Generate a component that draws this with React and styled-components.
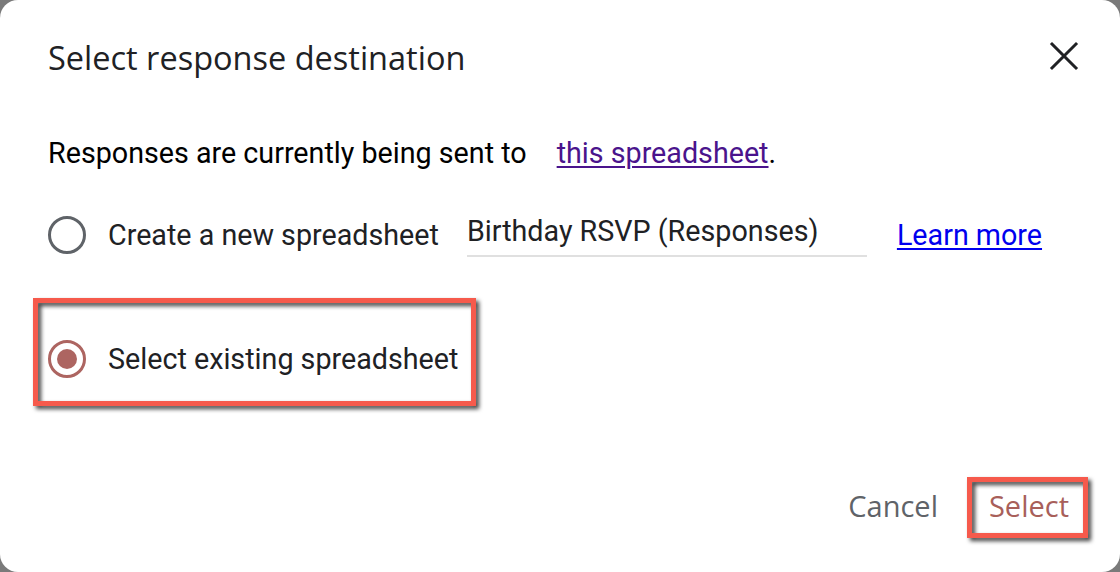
import React from 'react';
import styled, { createGlobalStyle } from 'styled-components';

const GlobalStyle = createGlobalStyle`
  html, body {
    margin: 0;
    padding: 0;
    background: #7a7a7a;
  }
  body {
    font-family: Roboto, "Liberation Sans", sans-serif;
  }
`;

const Dialog = styled.div`
  box-sizing: border-box;
  width: 1120px;
  height: 572px;
  background: #fff;
  border-radius: 18px;
  padding: 38px 36px 43px 48px;
  display: flex;
  flex-direction: column;
`;

const Header = styled.div`
  display: flex;
  align-items: center;
  justify-content: space-between;
  height: 40px;
`;

const Title = styled.h2`
  margin: 0;
  font-family: "Open Sans", sans-serif;
  font-weight: 500;
  font-size: 32.5px;
  line-height: 40px;
  color: #202124;
`;

const CloseButton = styled.button`
  border: 0;
  background: none;
  padding: 0;
  width: 40px;
  height: 40px;
  display: flex;
  align-items: center;
  justify-content: center;
  margin-top: -4px;
`;

const Text = styled.p`
  margin: 55px 0 0;
  font-size: 28.7px;
  line-height: 40px;
  color: #000;
`;

const Link = styled.a`
  color: ${p => p.$visited ? '#4a148c' : '#0000ee'};
  font-size: 28.7px;
  text-decoration: underline;
  text-underline-offset: 3px;
  text-decoration-thickness: 2px;
  margin-left: ${p => p.$gap || 0}px;
  cursor: pointer;
`;

const Options = styled.div`
  display: flex;
  flex-direction: column;
  gap: 76px;
  margin-top: 38px;
`;

const Row = styled.div`
  display: flex;
  align-items: center;
  height: 48px;
`;

const Radio = styled.span`
  box-sizing: border-box;
  width: 38px;
  height: 38px;
  border-radius: 50%;
  border: 3px solid ${p => p.$checked ? '#ad6561' : '#5f6368'};
  display: flex;
  align-items: center;
  justify-content: center;
  flex-shrink: 0;
  &::after {
    content: '';
    display: ${p => p.$checked ? 'block' : 'none'};
    width: 20px;
    height: 20px;
    border-radius: 50%;
    background: #ad6561;
  }
`;

const Label = styled.span`
  margin-left: 22px;
  font-size: 28.7px;
  color: #202124;
  white-space: nowrap;
`;

const NameInput = styled.div`
  box-sizing: border-box;
  width: 400px;
  height: 48px;
  margin-left: 28px;
  margin-top: -4px;
  border-bottom: 2px solid #e0e0e0;
  font-size: 28.7px;
  line-height: 44px;
  color: #202124;
  white-space: nowrap;
`;

const Highlight = styled.div`
  position: relative;
  align-self: flex-start;
  &::after {
    content: '';
    position: absolute;
    top: ${p => p.$top}px;
    right: ${p => p.$right}px;
    bottom: ${p => p.$bottom}px;
    left: ${p => p.$left}px;
    border: 5px solid #f65a4c;
    filter: drop-shadow(3px 3px 2px rgba(0, 0, 0, 0.75));
    pointer-events: none;
  }
`;

const Footer = styled.div`
  margin-top: auto;
  margin-right: -3px;
  display: flex;
  justify-content: flex-end;
  align-items: center;
  gap: 15px;
`;

const Button = styled.button`
  border: 0;
  background: none;
  padding: 0 18px;
  height: 48px;
  font-family: "Open Sans", sans-serif;
  font-weight: 500;
  font-size: 29px;
  color: ${p => p.$primary ? '#a85f5a' : '#5f6368'};
`;

const CloseIcon = () => (
  <svg width="30" height="30" viewBox="0 0 30 30">
    <path d="M3 3 L27 27 M27 3 L3 27" stroke="#202124" strokeWidth="3" strokeLinecap="square" />
  </svg>
);

export default function App() {
  return (
    <>
      <GlobalStyle />
      <Dialog>
        <Header>
          <Title>Select response destination</Title>
          <CloseButton aria-label="Close"><CloseIcon /></CloseButton>
        </Header>
        <Text>
          Responses are currently being sent to
          <Link $visited $gap={30}>this spreadsheet</Link>.
        </Text>
        <Options>
          <Row>
            <Radio />
            <Label>Create a new spreadsheet</Label>
            <NameInput>Birthday RSVP (Responses)</NameInput>
            <Link $gap={30}>Learn more</Link>
          </Row>
          <Highlight $top={-37} $right={-18} $bottom={-23} $left={-15}>
            <Row>
              <Radio $checked />
              <Label>Select existing spreadsheet</Label>
            </Row>
          </Highlight>
        </Options>
        <Footer>
          <Button>Cancel</Button>
          <Highlight $top={-4} $right={-1} $bottom={-9} $left={-4}>
            <Button $primary>Select</Button>
          </Highlight>
        </Footer>
      </Dialog>
    </>
  );
}
